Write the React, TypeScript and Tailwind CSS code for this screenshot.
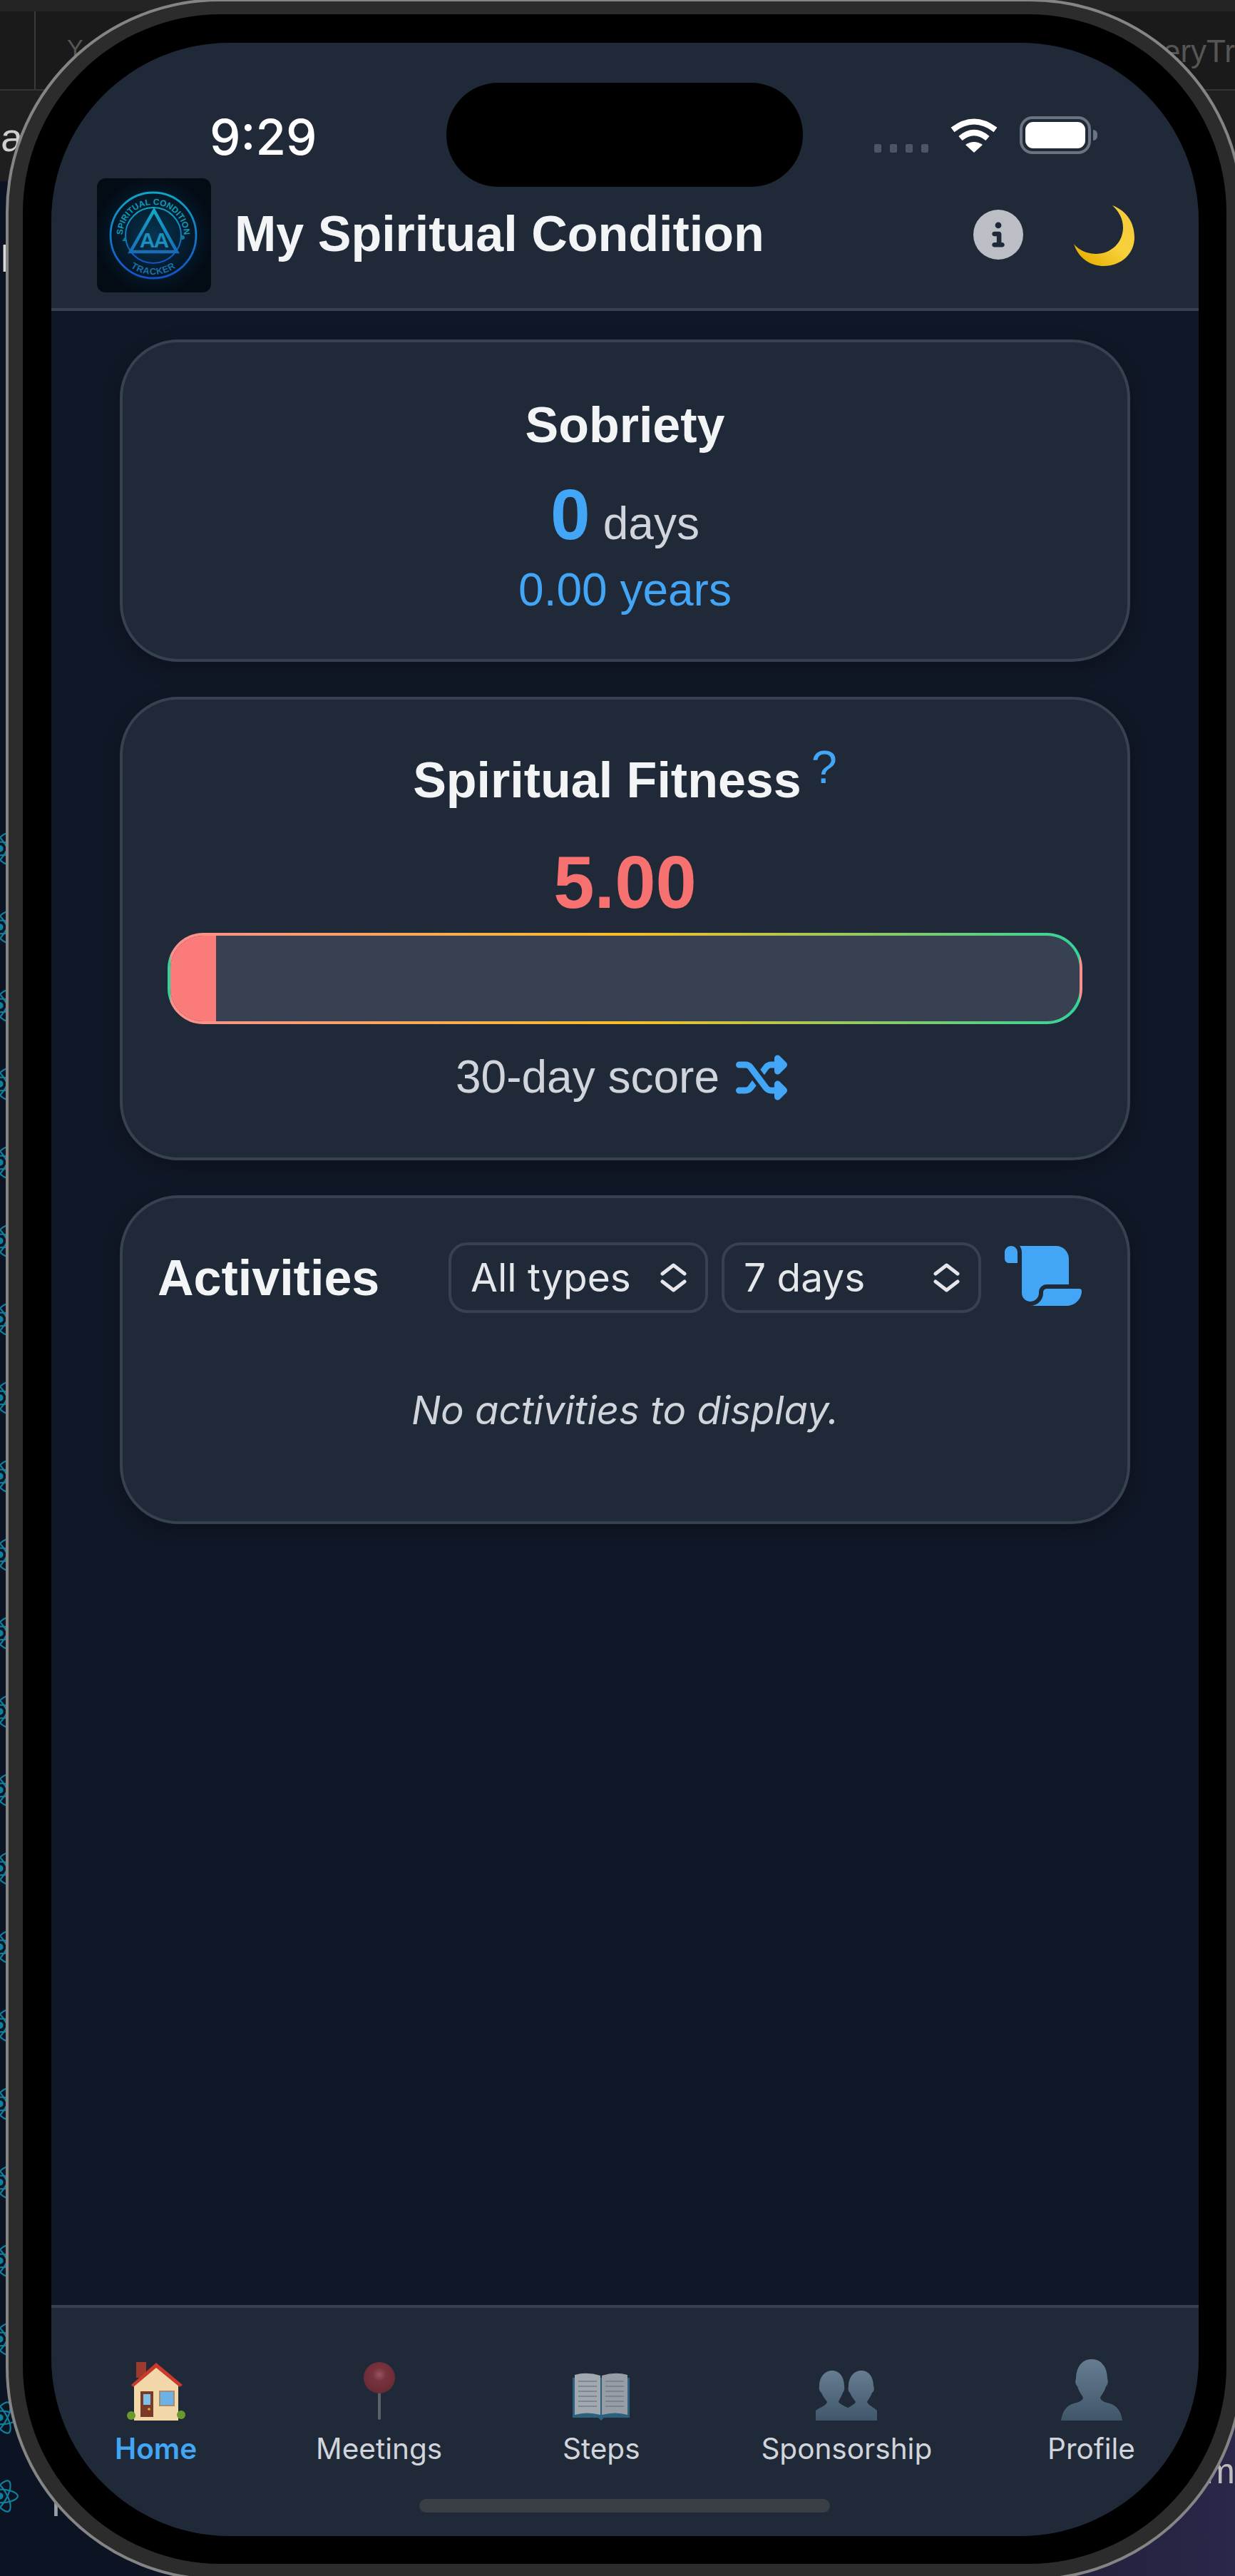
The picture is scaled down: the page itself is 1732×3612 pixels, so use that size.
import React from 'react';
import { FaShuffle, FaScroll, FaCircleInfo, FaReact } from 'react-icons/fa6';

const INTER = "font-['Inter',sans-serif]";

function Chevrons() {
  return (
    <svg viewBox="0 0 37 41" className="w-[37px] h-[41px]" fill="none" stroke="#e5e7eb" strokeWidth="5" strokeLinecap="round" strokeLinejoin="round">
      <polyline points="3,15 18.5,3 34,15" />
      <polyline points="3,26 18.5,38 34,26" />
    </svg>
  );
}

function Select({ label }: { label: string }) {
  return (
    <div className={`flex items-center justify-between w-[364px] h-[99px] rounded-[26px] border-[4px] border-[#374151] pl-[27px] pr-[26px] text-[55px] leading-none text-[#e5e7eb] ${INTER}`}>
      <span>{label}</span>
      <Chevrons />
    </div>
  );
}

function Logo() {
  return (
    <div className="w-[160px] h-[160px] rounded-[12px] bg-[radial-gradient(circle_at_50%_50%,#07344f_0%,#041a2b_45%,#030b14_75%)] shrink-0">
      <svg viewBox="0 0 160 160" className="w-[160px] h-[160px]">
        <defs>
          <linearGradient id="rim" x1="0" y1="0" x2="0" y2="1">
            <stop offset="0" stopColor="#0ea5c4" />
            <stop offset="1" stopColor="#1650c8" />
          </linearGradient>
          <linearGradient id="tri" x1="0" y1="0" x2="0" y2="1">
            <stop offset="0" stopColor="#12a8c6" />
            <stop offset="1" stopColor="#1a6cb8" />
          </linearGradient>
          <path id="arcTop" d="M 79 123 A 43 43 0 1 1 79 37 A 43 43 0 1 1 79 123" />
          <path id="arcBot" d="M 24 80 A 55 55 0 0 0 134 80" />
        </defs>
        <circle cx="79" cy="80" r="60" fill="none" stroke="url(#rim)" strokeWidth="2.8" />
        <circle cx="79" cy="80" r="39" fill="none" stroke="url(#rim)" strokeWidth="2" />
        <text fontFamily="Liberation Sans, sans-serif" fontWeight="700" fontSize="12" fill="#0f9ab8">
          <textPath href="#arcTop" startOffset="50%" textAnchor="middle">SPIRITUAL CONDITION</textPath>
        </text>
        <text fontFamily="Liberation Sans, sans-serif" fontWeight="700" fontSize="13" fill="#1670a8" letterSpacing="0.6">
          <textPath href="#arcBot" startOffset="50%" textAnchor="middle">TRACKER</textPath>
        </text>
        <path d="M80 45 L112 103 L47 103 Z" fill="none" stroke="url(#tri)" strokeWidth="4.5" strokeLinejoin="miter" />
        <text x="79.5" y="97" textAnchor="middle" fontFamily="Liberation Sans, sans-serif" fontWeight="700" fontSize="30" fill="#1a8fc0" letterSpacing="-2">AA</text>
        <path d="M39 82 l-3.5 6 h7 Z" fill="#0f7a99" />
        <circle cx="120" cy="83" r="3" fill="#0f7a99" />
      </svg>
    </div>
  );
}

function Wifi() {
  return (
    <svg viewBox="0 0 66 49" className="w-[66px] h-[49px]" fill="none" stroke="#fff" strokeWidth="8">
      <path d="M3 17 Q33 -6 63 17" />
      <path d="M14 29 Q33 13 52 29" />
      <path d="M33 49 L21 38 Q33 30 45 38 Z" fill="#fff" stroke="none" />
    </svg>
  );
}

function Battery() {
  return (
    <div className="flex items-center">
      <div className="w-[100px] h-[53px] rounded-[18px] border-[4px] border-[#6b7280] p-[4px]">
        <div className="w-full h-full rounded-[11px] bg-white" />
      </div>
      <div className="ml-[3px] w-[6px] h-[15px] rounded-r-full bg-[#6b7280]" />
    </div>
  );
}

function Moon() {
  return (
    <svg viewBox="0 0 85 85" className="w-[85px] h-[85px]">
      <defs>
        <linearGradient id="moon" x1="0.2" y1="0.9" x2="0.8" y2="0.2">
          <stop offset="0" stopColor="#eab308" />
          <stop offset="0.55" stopColor="#f7d23c" />
          <stop offset="1" stopColor="#f5cc3a" />
        </linearGradient>
      </defs>
      <path d="M54 0 C75 8 85 25 85 45 C85 68 66 85 42 85 C22 85 6 73 0 54 C8 64 20 68 31 68 C52 68 69 52 69 31 C69 19 63 8 54 0 Z" fill="url(#moon)" />
    </svg>
  );
}

function House() {
  return (
    <svg viewBox="0 0 82 82" className="w-[82px] h-[82px]">
      <rect x="13" y="0" width="14" height="22" fill="#9c3a2c" />
      <path d="M10 32 L41 3 L72 32 L72 82 L10 82 Z" fill="#f2d7a8" />
      <path d="M6 32 L41 1 L78 32 L74 35 L41 8 L9 35 Z" fill="#c9392c" />
      <rect x="19" y="41" width="18" height="36" fill="#7a3a28" />
      <rect x="23" y="45" width="10" height="15" fill="#7fc0ea" />
      <circle cx="31" cy="66" r="1.8" fill="#e2b33a" />
      <rect x="45" y="40" width="22" height="22" fill="#a58d75" />
      <rect x="47" y="42" width="18" height="18" fill="#6cb2e6" />
      <circle cx="6" cy="75" r="6" fill="#6a9a2e" />
      <circle cx="76" cy="74" r="6" fill="#6a9a2e" />
    </svg>
  );
}

function Pin() {
  return (
    <svg viewBox="0 0 46 82" className="w-[46px] h-[82px]">
      <defs>
        <radialGradient id="pinh" cx="0.5" cy="0.4" r="0.6">
          <stop offset="0" stopColor="#b5606a" />
          <stop offset="0.35" stopColor="#8e3640" />
          <stop offset="1" stopColor="#7a2b34" />
        </radialGradient>
      </defs>
      <rect x="21" y="40" width="4" height="41" rx="2" fill="#6b7076" />
      <circle cx="23" cy="22" r="22" fill="url(#pinh)" />
    </svg>
  );
}

function Book() {
  return (
    <svg viewBox="0 0 80 68" className="w-[80px] h-[68px]">
      <path d="M0 8 L0 64 L36 64 L40 68 L44 64 L80 64 L80 8 Z" fill="#2f6f91" />
      <path d="M3 4 Q20 -1 39 5 L39 60 Q20 55 3 60 Z" fill="#c3c8cd" />
      <path d="M41 5 Q60 -1 77 4 L77 60 Q60 55 41 60 Z" fill="#b6bbc1" />
      <g stroke="#8a9198" strokeWidth="1.5">
        <path d="M8 13 H34 M8 20 H34 M8 27 H34 M8 34 H34 M8 41 H34 M8 48 H34" />
        <path d="M46 13 H72 M46 20 H72 M46 27 H72 M46 34 H72 M46 41 H72 M46 48 H72" />
      </g>
    </svg>
  );
}

function Bust() {
  return (
    <svg viewBox="0 0 86 86" className="w-[86px] h-[86px]">
      <defs>
        <linearGradient id="bust1" x1="0" y1="0" x2="0" y2="1">
          <stop offset="0" stopColor="#657c91" />
          <stop offset="1" stopColor="#3f566b" />
        </linearGradient>
      </defs>
      <path d="M43 0 C57 0 65 12 65 27 C67 32 65 37 63 38 C61 46 56 51 55 54 C56 58 60 60 68 62 C78 65 84 72 86 86 L0 86 C2 72 8 65 18 62 C26 60 30 58 31 54 C30 51 25 46 23 38 C21 37 19 32 21 27 C21 12 29 0 43 0 Z" fill="url(#bust1)" />
    </svg>
  );
}

function Busts() {
  return (
    <svg viewBox="0 0 86 70" className="w-[86px] h-[70px]">
      <defs>
        <linearGradient id="bust2" x1="0" y1="0" x2="0" y2="1">
          <stop offset="0" stopColor="#657c91" />
          <stop offset="1" stopColor="#3f566b" />
        </linearGradient>
      </defs>
      <path d="M23 0 C34 0 40 10 40 22 C41 26 39 30 38 31 C36 37 33 40 32 44 C35 48 42 50 48 54 C55 58 57 64 57 70 L0 70 L0 56 C8 50 14 50 16 44 C14 40 10 37 8 31 C6 30 4 26 5 22 C5 10 12 0 23 0 Z" fill="url(#bust2)" />
      <path d="M64 0 C75 0 81 10 81 22 C83 26 81 30 79 31 C77 37 74 40 72 44 C75 50 80 50 86 56 L86 70 L50 70 C52 62 48 58 43 54 C48 50 54 48 56 44 C54 40 50 37 48 31 C46 30 45 26 46 22 C46 10 53 0 64 0 Z" fill="url(#bust2)" />
    </svg>
  );
}

function Tab({ icon, label, active, dim, className = '' }: { icon: React.ReactNode; label: string; active?: boolean; dim?: boolean; className?: string }) {
  return (
    <div className={`flex flex-col items-center ${className}`}>
      <div className={`h-[86px] flex items-end ${dim ? 'opacity-80' : ''}`}>{icon}</div>
      <span className={`mt-[16px] text-[40.5px] leading-[48px] ${INTER} ${active ? 'text-[#42a5f5] font-semibold' : 'text-[#d1d5db]'}`}>{label}</span>
    </div>
  );
}

function Backdrop() {
  const reactIcons = Array.from({ length: 22 }, (_, i) => i);
  return (
    <div className="absolute inset-0 flex flex-col bg-[linear-gradient(to_right,#0c1424_0%,#0c1424_55%,#2a2748_100%)]">
      <div className="h-[127px] bg-[#1a1a1a] border-t-[16px] border-[#242424] border-b-[2px] border-b-[#333] flex justify-between">
        <div className="flex">
          <div className="w-[50px] border-r-[2px] border-[#3a3a3a]" />
          <div className="pl-[44px] pt-[34px] text-[#555] text-[34px] leading-none">Y</div>
        </div>
        <div className="pt-[34px] text-[#555] text-[44px] leading-none">eryTr</div>
      </div>
      <div className="h-[127px] bg-[#1f1f1f] text-[#cfcfcf] text-[56px] leading-none pt-[38px] pl-[1px]">a</div>
      <div className="flex-1 relative">
        <div className="pt-[80px] text-[#d8d8d8] text-[56px] leading-none">R</div>
        <div className="absolute left-[-26px] top-[910px] flex flex-col gap-[58px] text-[#0e7f9c] text-[52px]">
          {reactIcons.map((i) => (
            <FaReact key={i} />
          ))}
        </div>
        <div className="absolute left-[72px] top-[3232px] text-[#9aa0a8] text-[50px] leading-none">F</div>
        <div className="absolute right-0 top-[3186px] text-[#bbb] text-[50px] leading-none">m</div>
      </div>
    </div>
  );
}

export default function App() {
  return (
    <div className="relative w-[1732px] h-[3612px] overflow-hidden font-['Liberation_Sans',Arial,sans-serif]">
      <Backdrop />

      {/* device */}
      <div className="absolute left-[8px] top-[-2px] w-[1736px] rounded-[300px] border-[4px] border-[#858585] bg-[#2c2c2c] px-[20px] pt-[18px] pb-[20px]">
        <div className="rounded-[278px] bg-black px-[40px] pt-[40px] pb-[39px]">
          <div className="relative w-[1609px] h-[3496px] rounded-[250px] overflow-hidden bg-[#101726] flex flex-col">
            {/* dynamic island */}
            <div className="absolute left-[554px] top-[56px] w-[500px] h-[146px] rounded-[73px] bg-black" />

            {/* header */}
            <header className="bg-[#1f2937] border-b-[4px] border-[#374151]">
              <div className="h-[190px] flex items-end justify-between pl-[222px] pr-[142px] pb-[34px]">
                <span className={`text-[69px] leading-[72px] mb-[-12px] text-white ${INTER} font-medium`}>9:29</span>
                <div className="flex items-end gap-[31px]">
                  <div className="flex gap-[12px] mb-[2px]">
                    <div className="w-[10px] h-[12px] rounded-[2px] bg-[#4b5563]" />
                    <div className="w-[10px] h-[12px] rounded-[2px] bg-[#4b5563]" />
                    <div className="w-[10px] h-[12px] rounded-[2px] bg-[#4b5563]" />
                    <div className="w-[10px] h-[12px] rounded-[2px] bg-[#4b5563]" />
                  </div>
                  <div className="mb-[2px]"><Wifi /></div>
                  <Battery />
                </div>
              </div>
              <div className="flex items-center pl-[64px] pr-[90px] pb-[22px] h-[182px]">
                <Logo />
                <h1 className="ml-[33px] mb-[4px] text-[70px] leading-[84px] font-bold text-[#f3f4f6]">My Spiritual Condition</h1>
                <div className="ml-auto flex items-center gap-[71px]">
                  <FaCircleInfo className="w-[70px] h-[70px] text-[#bbbec5] mt-[-2px]" />
                  <Moon />
                </div>
              </div>
            </header>

            {/* main */}
            <main className="flex-1 px-[96px] pt-[40px] flex flex-col gap-[49px]">
              <section className="rounded-[82px] border-[4px] border-[#374151] bg-[#1f2937] shadow-[0_8px_24px_rgba(0,0,0,0.25)] text-center pt-[74px] pb-[58px]">
                <h2 className="text-[70px] leading-[84px] font-bold text-[#f3f4f6]">Sobriety</h2>
                <div className="mt-[27px] leading-[112px] h-[112px]">
                  <span className="text-[100px] font-bold text-[#42a5f5]">0</span>
                  <span className="ml-[18px] text-[64px] text-[#d1d5db]">days</span>
                </div>
                <div className="mt-[12px] text-[64px] leading-[77px] text-[#42a5f5]">0.00 years</div>
              </section>

              <section className="rounded-[82px] border-[4px] border-[#374151] bg-[#1f2937] shadow-[0_8px_24px_rgba(0,0,0,0.25)] text-center pt-[71px] pb-[74px]">
                <h2 className="h-[84px] text-[70px] leading-[84px] font-bold text-[#f3f4f6]">
                  Spiritual Fitness
                  <span className="relative top-[-20px] ml-[14px] text-[65px] font-normal text-[#42a5f5]">?</span>
                </h2>
                <div className="mt-[45px] text-[103px] leading-[114px] font-bold text-[#f87171]">5.00</div>
                <div className="mx-[63px] mt-[13px] h-[128px] rounded-[50px] border-[4px] border-transparent bg-[linear-gradient(90deg,#fb8f8f,#fbbf24,#34d399)]">
                  <div className="h-full rounded-[46px] overflow-hidden bg-[#374151]">
                    <div className="h-full w-[5%] bg-[#fb7a7a]" />
                  </div>
                </div>
                <div className="mt-[36px] pr-[10px] flex items-center justify-center gap-[23px] text-[64px] leading-[77px] text-[#d1d5db]">
                  <span>30-day score</span>
                  <FaShuffle className="w-[72px] h-[72px] text-[#42a5f5]" />
                </div>
              </section>

              <section className="rounded-[82px] border-[4px] border-[#374151] bg-[#1f2937] shadow-[0_8px_24px_rgba(0,0,0,0.25)] pt-[62px] pb-[116px]">
                <div className="flex items-center justify-between pl-[49px] pr-[64px]">
                  <h2 className="text-[70px] leading-[84px] font-bold text-[#f3f4f6]">Activities</h2>
                  <div className="flex items-center">
                    <Select label="All types" />
                    <div className="ml-[19px]"><Select label="7 days" /></div>
                    <FaScroll className="ml-[33px] w-[108px] h-[96px] text-[#42a5f5] mt-[-6px]" />
                  </div>
                </div>
                <p className={`mt-[96px] text-center text-[54.5px] leading-[80px] italic text-[#d1d5db] ${INTER}`}>No activities to display.</p>
              </section>
            </main>

            {/* tab bar */}
            <nav className="relative h-[324px] bg-[#1f2937] border-t-[4px] border-[#374151] pt-[72px] pl-[89px] pr-[89px] flex justify-between items-start">
              <Tab icon={<House />} label="Home" active />
              <Tab icon={<Pin />} label="Meetings" dim />
              <Tab icon={<Book />} label="Steps" dim className="ml-[2px] mr-[-2px]" />
              <Tab icon={<Busts />} label="Sponsorship" className="ml-[5px] mr-[-5px]" />
              <Tab icon={<Bust />} label="Profile" />
              <div className="absolute left-[516px] bottom-[33px] w-[576px] h-[19px] rounded-full bg-[#3a3f46]" />
            </nav>
          </div>
        </div>
      </div>
    </div>
  );
}
